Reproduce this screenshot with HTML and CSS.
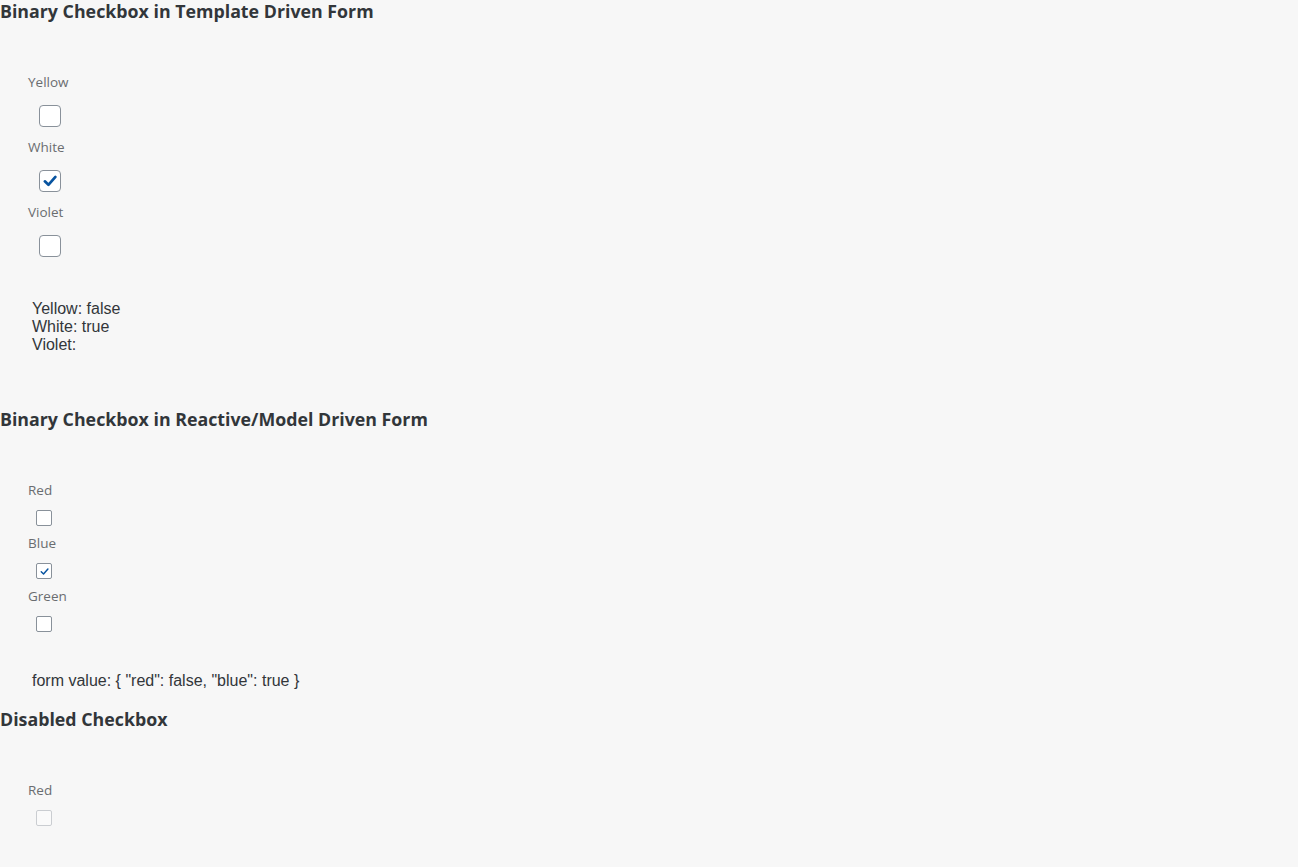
FILE: index.html
```html
<!DOCTYPE html>
<html>
<head>
<meta charset="utf-8">
<link rel="stylesheet" href="styles.css">
</head>
<body>
<section class="sec sec-1">
  <h3 class="title">Binary Checkbox in Template Driven Form</h3>
  <div class="group">
    <div class="field">
      <div class="label">Yellow</div>
      <div class="cb-wrap cozy"><span class="box"></span></div>
    </div>
    <div class="field">
      <div class="label">White</div>
      <div class="cb-wrap cozy"><span class="box checked"><svg viewBox="0 0 16 16" class="tick"><path d="M3.4 8.3 L6.6 11.4 L12.8 4.4" /></svg></span></div>
    </div>
    <div class="field">
      <div class="label">Violet</div>
      <div class="cb-wrap cozy"><span class="box"></span></div>
    </div>
  </div>
  <div class="values">Yellow: false<br>White: true<br>Violet:</div>
</section>

<section class="sec sec-2">
  <h3 class="title">Binary Checkbox in Reactive/Model Driven Form</h3>
  <div class="group">
    <div class="field">
      <div class="label">Red</div>
      <div class="cb-wrap compact"><span class="box"></span></div>
    </div>
    <div class="field">
      <div class="label">Blue</div>
      <div class="cb-wrap compact"><span class="box checked"><svg viewBox="0 0 16 16" class="tick"><path d="M4 8.3 L6.8 11 L12.2 5" /></svg></span></div>
    </div>
    <div class="field">
      <div class="label">Green</div>
      <div class="cb-wrap compact"><span class="box"></span></div>
    </div>
  </div>
  <div class="values form-value">form value: { "red": false, "blue": true }</div>
</section>

<section class="sec sec-3">
  <h3 class="title">Disabled Checkbox</h3>
  <div class="group">
    <div class="field">
      <div class="label">Red</div>
      <div class="cb-wrap compact disabled"><span class="box"></span></div>
    </div>
  </div>
</section>
</body>
</html>
```

FILE: styles.css
```css
html, body {
  margin: 0;
  padding: 0;
  background: #f7f7f7;
}
body {
  font-family: "Open Sans", "Liberation Sans", sans-serif;
  color: #32363a;
  width: 1298px;
  min-height: 867px;
}
.title {
  margin: 0;
  font-family: "Open Sans", "Liberation Sans", sans-serif;
  font-weight: 700;
  font-size: 17.8px;
  line-height: 22px;
  color: #32363a;
}
.group {
  padding-top: 51px;
  display: flex;
  flex-direction: column;
}
.field {
  display: flex;
  flex-direction: column;
}
.label {
  box-sizing: border-box;
  padding-left: 28px;
  height: 21px;
  line-height: 18px;
  font-size: 13.5px;
  color: #6a6d70;
}
.cb-wrap {
  display: flex;
  align-items: center;
}
.cb-wrap.cozy {
  height: 44px;
  padding-left: 39px;
}
.cb-wrap.compact {
  height: 32px;
  padding-left: 36px;
}
.box {
  box-sizing: border-box;
  display: flex;
  align-items: center;
  justify-content: center;
  background: #fff;
  border: 1px solid #89919a;
}
.cozy .box {
  width: 22px;
  height: 22px;
  border-radius: 4px;
}
.compact .box {
  width: 16px;
  height: 16px;
  border-radius: 2px;
}
.tick {
  fill: none;
  stroke: #0854a0;
  stroke-linecap: round;
  stroke-linejoin: round;
}
.cozy .tick {
  width: 18px;
  height: 18px;
  stroke-width: 2.4;
}
.compact .tick {
  width: 13px;
  height: 13px;
  stroke-width: 1.8;
}
.disabled .box {
  opacity: 0.4;
}
.values {
  padding-left: 32px;
  font-family: "Liberation Sans", Arial, sans-serif;
  font-size: 16px;
  line-height: 18px;
  color: #32363a;
}
.sec-1 .values {
  padding-top: 32px;
  padding-bottom: 54px;
}
.sec-2 .values {
  padding-top: 32px;
  padding-bottom: 18px;
}
```
